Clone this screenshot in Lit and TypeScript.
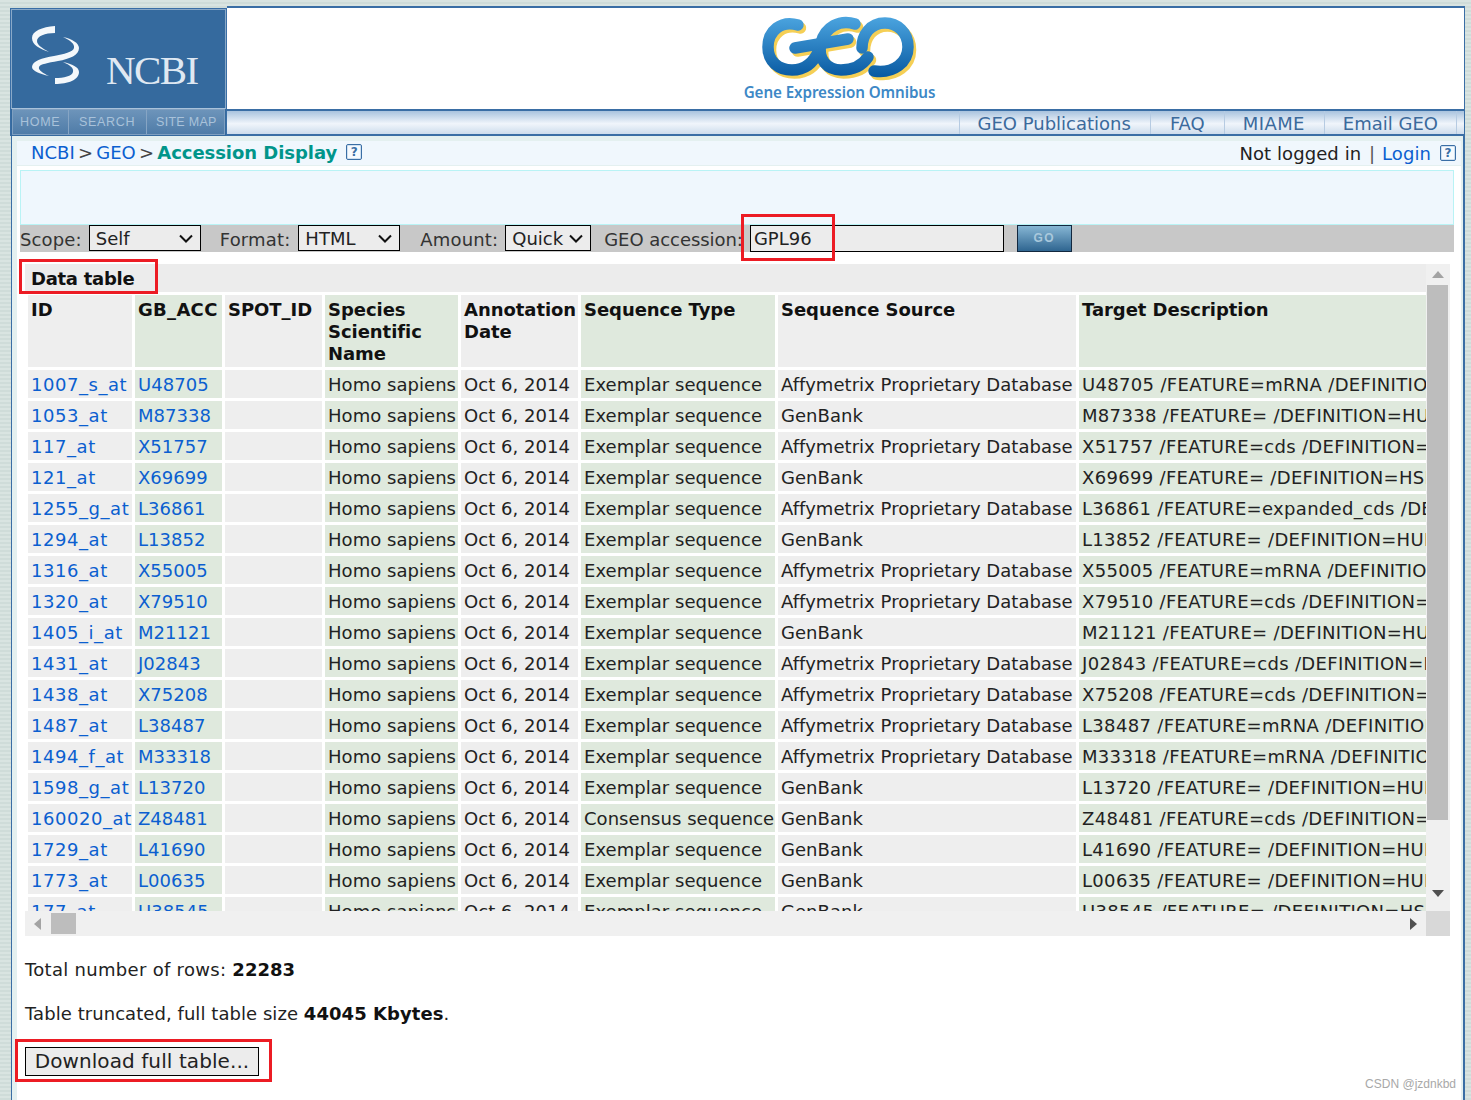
import { LitElement, html, svg, css } from "lit";
import { customElement } from "lit/decorators.js";

const AFFY = "Affymetrix Proprietary Database";
const EX = "Exemplar sequence";

// id, accession, sequence type, source, rest of the target description
const ROWS: [string, string, string, string, string][] = [
  ["1007_s_at", "U48705", EX, AFFY, "/FEATURE=mRNA /DEFINITION=HUMDDR"],
  ["1053_at", "M87338", EX, "GenBank", "/FEATURE= /DEFINITION=HUMA1SBU"],
  ["117_at", "X51757", EX, AFFY, "/FEATURE=cds /DEFINITION=HSP70B"],
  ["121_at", "X69699", EX, "GenBank", "/FEATURE= /DEFINITION=HSPAX8A"],
  ["1255_g_at", "L36861", EX, AFFY, "/FEATURE=expanded_cds /DEFINITION=HUMGCAPB"],
  ["1294_at", "L13852", EX, "GenBank", "/FEATURE= /DEFINITION=HUME1URP"],
  ["1316_at", "X55005", EX, AFFY, "/FEATURE=mRNA /DEFINITION=HSCERBA"],
  ["1320_at", "X79510", EX, AFFY, "/FEATURE=cds /DEFINITION=HSPTPD1"],
  ["1405_i_at", "M21121", EX, "GenBank", "/FEATURE= /DEFINITION=HUMTCSM"],
  ["1431_at", "J02843", EX, AFFY, "/FEATURE=cds /DEFINITION=HUMCYPIIE"],
  ["1438_at", "X75208", EX, AFFY, "/FEATURE=cds /DEFINITION=HSPTKR"],
  ["1487_at", "L38487", EX, AFFY, "/FEATURE=mRNA /DEFINITION=HUMERRA"],
  ["1494_f_at", "M33318", EX, AFFY, "/FEATURE=mRNA /DEFINITION=HUMCYPIIA"],
  ["1598_g_at", "L13720", EX, "GenBank", "/FEATURE= /DEFINITION=HUMGAS6"],
  ["160020_at", "Z48481", "Consensus sequence", "GenBank", "/FEATURE=cds /DEFINITION=HSMMP14"],
  ["1729_at", "L41690", EX, "GenBank", "/FEATURE= /DEFINITION=HUMTRADD"],
  ["1773_at", "L00635", EX, "GenBank", "/FEATURE= /DEFINITION=HUMFPTB"],
  ["177_at", "U38545", EX, "GenBank", "/FEATURE= /DEFINITION=HSU38545"],
];

const HEADERS = [
  "ID",
  "GB_ACC",
  "SPOT_ID",
  "Species Scientific Name",
  "Annotation Date",
  "Sequence Type",
  "Sequence Source",
  "Target Description",
];

const COLS = [104, 87, 97, 133, 117, 194, 298, 420];

const CHEVRON =
  "url(\"data:image/svg+xml,%3Csvg xmlns='http://www.w3.org/2000/svg' width='14' height='9'%3E%3Cpath d='M1 1.5l6 6 6-6' fill='none' stroke='%23111' stroke-width='2'/%3E%3C/svg%3E\")";

@customElement("app-root")
export class AppRoot extends LitElement {
  static override styles = css`
    :host {
      display: block;
      position: relative;
      height: 1100px;
      overflow: hidden;
      background: repeating-linear-gradient(0deg, #cfdcd9 0 2px, #d9e4e1 2px 4px);
      font-family: "DejaVu Sans", Verdana, sans-serif;
      font-size: 18px;
      color: #222;
    }
    a {
      color: #0b5fd0;
      text-decoration: none;
    }
    .frame {
      margin-left: 10px;
      width: 1455px;
      padding-top: 6px;
    }
    .top {
      display: flex;
      height: 130px;
    }
    .brand {
      width: 217px;
      box-sizing: border-box;
      margin-top: 2px;
      border: 1px solid #3a6ea5;
      border-bottom: none;
      background: #356a9e;
      flex: none;
    }
    .ncbi {
      display: flex;
      height: 100px;
      box-sizing: border-box;
      border: 1px solid #8aa9c8;
      border-bottom: 1px solid #a9c2da;
      align-items: flex-start;
    }
    .ncbi svg {
      display: block;
      margin: 10px 0 0 8px;
      flex: none;
    }
    .ncbi span {
      margin: 36px 0 0 23px;
      font: 41px "Liberation Serif", serif;
      letter-spacing: -1.6px;
      color: #dfe8f2;
    }
    .ncbi-nav {
      display: flex;
      height: 26px;
      margin: 0 1px;
      background: linear-gradient(#6d94ba, #4f7ca8);
      border: 1px solid #7f9fc0;
      box-sizing: border-box;
      font: 12.5px "Liberation Sans", sans-serif;
      letter-spacing: 0.7px;
      color: #a9c2da;
      line-height: 24px;
      white-space: nowrap;
    }
    .ncbi-nav div {
      padding-left: 10px;
      border-right: 1px solid #86a5c4;
      box-sizing: border-box;
    }
    .ncbi-nav .home {
      width: 56px;
      padding-left: 7px;
    }
    .ncbi-nav .search {
      width: 78px;
    }
    .ncbi-nav .map {
      border-right: none;
      padding-left: 9px;
      letter-spacing: 0.3px;
    }
    .banner {
      flex: 1;
      display: flex;
      flex-direction: column;
    }
    .geo {
      height: 103px;
      background: #fff;
      border-top: 2px solid #3a6ea5;
      border-right: 1px solid #3a6ea5;
      display: flex;
      flex-direction: column;
      align-items: center;
      box-sizing: border-box;
      padding-right: 12px;
    }
    .geo svg {
      display: block;
      margin-top: 2px;
      flex: none;
    }
    .geo span {
      font: 600 15.2px "Noto Sans", sans-serif;
      letter-spacing: -0.08px;
      line-height: 18px;
      color: #3d88c6;
      margin-top: 1px;
    }
    .links {
      height: 27px;
      border-top: 2px solid #3a6ea5;
      border-bottom: 2px solid #3a6ea5;
      border-right: 1px solid #3a6ea5;
      box-sizing: border-box;
      background: linear-gradient(#a9c3de, #f0f5fb 55%, #cddcec);
      display: flex;
      justify-content: flex-end;
      padding-right: 7px;
      color: #3b6a9c;
      line-height: 26px;
    }
    .links div {
      padding: 0 19px 0 18px;
      border-left: 1px solid #b6cbe2;
    }
    .links .faq {
      padding-left: 19px;
    }
    .links .miame {
      letter-spacing: 0.4px;
    }
    .links .email {
      padding-right: 18px;
      border-right: 1px solid #b6cbe2;
    }
    .body {
      border-left: 1px solid #3a6ea5;
      border-right: 2px solid #3a6ea5;
      margin-left: 1px;
      padding: 5px 2px 0 5px;
      background: #e4f0f0;
      height: 970px;
      box-sizing: border-box;
    }
    .crumb {
      height: 24px;
      display: flex;
      align-items: center;
      justify-content: space-between;
      background: #f0f7fd;
      padding: 0 5px 0 14px;
      color: #444;
      white-space: nowrap;
    }
    .crumb-left {
      word-spacing: -2.5px;
      margin-top: -1px;
    }
    .crumb .here {
      color: #00958a;
      font-weight: 700;
      word-spacing: 0;
      letter-spacing: -0.05px;
    }
    .crumb-right {
      color: #222;
      margin-top: 1px;
      letter-spacing: 0.08px;
    }
    .sep {
      margin: 0 1px 0 2px;
      color: #555;
    }
    .help {
      display: inline-block;
      width: 14px;
      height: 14px;
      border: 1px solid #3a6ea5;
      border-radius: 2px;
      font: 700 12px/14px "DejaVu Sans", sans-serif;
      color: #3a6ea5;
      text-align: center;
      letter-spacing: 0;
      background: #f6fafe;
      box-shadow: inset 0 0 0 1px #cfe0f0;
      vertical-align: 3px;
      margin-left: 9px;
    }
    .panel {
      background: #fff;
      margin-top: 1px;
      height: 940px;
      padding: 4px 7px 0 3px;
      box-sizing: border-box;
    }
    .notice {
      height: 55px;
      box-sizing: border-box;
      background: #eff7fd;
      border: 1px solid #b9f3f5;
    }
    .form {
      height: 27px;
      background: #c8c8c8;
      display: flex;
      align-items: flex-start;
      line-height: 30px;
      letter-spacing: 0.15px;
      color: #333;
    }
    .form span {
      flex: none;
    }
    .form .acc-label {
      letter-spacing: -0.05px;
    }
    select,
    input {
      box-sizing: border-box;
      flex: none;
      border: 1px solid #000;
      border-radius: 0;
      background-color: #ececec;
      font: 18px "DejaVu Sans", sans-serif;
      color: #222;
    }
    select {
      height: 26px;
      appearance: none;
      padding: 0 0 0 6px;
      background-image: ${css([CHEVRON] as unknown as TemplateStringsArray)};
      background-repeat: no-repeat;
      background-position: right 7px center;
    }
    input {
      height: 27px;
      width: 254px;
      margin-left: 7px;
      padding: 0 0 0 3px;
    }
    .scope {
      width: 112px;
      margin: 0 19px 0 7px;
    }
    .format {
      width: 102px;
      margin: 0 20px 0 8px;
    }
    .amount {
      width: 86px;
      margin: 0 13px 0 7px;
    }
    .go {
      box-sizing: border-box;
      width: 55px;
      height: 27px;
      margin-left: 13px;
      border: 1px solid #12283f;
      background: linear-gradient(#86b6d4, #2f6590);
      color: #a9c8dc;
      font: 700 12px/25px "Liberation Sans", sans-serif;
      letter-spacing: 1.5px;
      text-align: center;
    }
    .scroller {
      margin: 12px 0 0 5px;
      display: grid;
      grid-template-columns: 1401px 24px;
      grid-template-rows: 647px 25px;
    }
    .view {
      overflow: hidden;
    }
    .caption {
      height: 28px;
      background: #ececec;
      font-weight: 700;
      padding-left: 6px;
      line-height: 29px;
      letter-spacing: -0.28px;
      color: #111;
    }
    table {
      table-layout: fixed;
      border-collapse: separate;
      border-spacing: 3px;
      width: 1477px;
    }
    th,
    td {
      padding: 0 0 0 3px;
      background: #eeeeee;
      overflow: hidden;
      white-space: nowrap;
      text-align: left;
    }
    th {
      height: 72px;
      vertical-align: top;
      white-space: normal;
      font-weight: 700;
      line-height: 22px;
      padding-top: 4px;
      box-sizing: border-box;
      color: #111;
      letter-spacing: -0.05px;
    }
    th.acc {
      letter-spacing: 0.3px;
    }
    td {
      box-sizing: border-box;
      height: 28px;
      padding-top: 2px;
      line-height: 26px;
      color: #222;
      letter-spacing: 0.04px;
    }
    td.id {
      letter-spacing: 0.55px;
    }
    td.target {
      letter-spacing: 0.32px;
    }
    .alt {
      background: #dfe9dd;
    }
    .vbar {
      background: #f0f0f0;
      display: flex;
      flex-direction: column;
      align-items: center;
      padding-top: 7px;
      box-sizing: border-box;
    }
    .vthumb {
      width: 21px;
      height: 535px;
      margin-top: 7px;
      margin-left: -1px;
      background: #bdbdbd;
    }
    .hbar {
      background: #f0f0f0;
      display: flex;
      align-items: center;
      padding-left: 9px;
    }
    .hthumb {
      width: 25px;
      height: 21px;
      margin-left: 10px;
      background: #bdbdbd;
    }
    .corner {
      background: #d8d8d8;
    }
    .up,
    .down,
    .left,
    .right {
      width: 0;
      height: 0;
      border-style: solid;
      border-color: transparent;
    }
    .up {
      border-width: 0 6px 7px;
      border-bottom-color: #a3a3a3;
    }
    .down {
      border-width: 7px 6px 0;
      border-top-color: #505050;
      margin-top: 70px;
    }
    .left {
      border-width: 6px 7px 6px 0;
      border-right-color: #a3a3a3;
    }
    .right {
      border-width: 6px 0 6px 7px;
      border-left-color: #505050;
      margin-left: auto;
      margin-right: 9px;
    }
    .foot {
      margin-left: 5px;
      letter-spacing: 0.06px;
      color: #222;
    }
    .foot p {
      margin: 0;
      height: 44px;
      line-height: 22px;
    }
    .foot p:first-child {
      margin-top: 23px;
      letter-spacing: 0.3px;
    }
    .foot b {
      color: #111;
      letter-spacing: 0.05px;
    }
    .download {
      display: block;
      width: 234px;
      height: 29px;
      box-sizing: border-box;
      border: 1px solid #000;
      background: #ececec;
      font: 20px/27px "DejaVu Sans", sans-serif;
      color: #222;
      letter-spacing: 0.09px;
      padding: 0;
      text-align: center;
    }
    /* red annotation boxes drawn over the screenshot */
    .mark {
      position: absolute;
      box-sizing: border-box;
      border: 3px solid #ec1c24;
    }
    .mark-input {
      left: 741px;
      top: 214px;
      width: 94px;
      height: 47px;
    }
    .mark-caption {
      left: 19px;
      top: 259px;
      width: 139px;
      height: 35px;
    }
    .mark-download {
      left: 15px;
      top: 1039px;
      width: 257px;
      height: 43px;
    }
    .watermark {
      position: absolute;
      right: 15px;
      bottom: 9px;
      font: 12px "Liberation Sans", sans-serif;
      color: #a8a8a8;
    }
  `;

  private renderGeoMark() {
    const strokes = svg`
      <path d="M58 15 C41 10 28 21 28 37 C28 52 39 60 52 60 C66 60 74 52 79 40" />
      <path d="M55 38 L108 29" />
      <path d="M115 14 C100 9 85 17 81 33 C77 50 88 60 101 60 C113 60 122 56 128 47" />
      <path d="M134 61 C154 64 168 52 168 37 C168 22 157 13 145 13 C130 13 122 25 122 38" />
    `;
    return html`
      <svg width="200" height="72" viewBox="0 0 200 72" fill="none" stroke-width="11.5" stroke-linecap="round">
        <defs>
          <linearGradient id="geoBlue" gradientUnits="userSpaceOnUse" x1="0" y1="8" x2="0" y2="66">
            <stop offset="0" stop-color="#4aa3de" />
            <stop offset="1" stop-color="#0a5ba3" />
          </linearGradient>
        </defs>
        <g stroke="#f5cf55" transform="translate(2.5 3)">${strokes}</g>
        <g stroke="url(#geoBlue)">${strokes}</g>
      </svg>
    `;
  }

  private renderHelix() {
    return html`
      <svg width="63" height="70" viewBox="0 0 63 70" fill="#f4f8fb">
        <path d="M35 6 C22 7 12 11 12 18 C12 25 20 29 29 32 C22 28 17 25 17 21 C17 16 25 13 35 13 Z" />
        <path d="M43 17 C50 20 55 24 54 28 C53 32 44 34 34 36 C22 38 12 41 12 47 C12 51 20 54 29 56 C23 53 18 50 19 47 C20 44 28 43 38 41 C50 39 59 35 59 28 C59 23 52 19 43 17 Z" />
        <path d="M43 42 C50 45 54 48 53 52 C52 56 44 58 35 58 L35 64 C48 64 59 60 59 52 C59 47 52 44 43 42 Z" />
      </svg>
    `;
  }

  override render() {
    return html`
      <div class="frame">
        <div class="top">
          <div class="brand">
            <div class="ncbi">${this.renderHelix()}<span>NCBI</span></div>
            <div class="ncbi-nav">
              <div class="home">HOME</div>
              <div class="search">SEARCH</div>
              <div class="map">SITE MAP</div>
            </div>
          </div>
          <div class="banner">
            <div class="geo">${this.renderGeoMark()}<span>Gene Expression Omnibus</span></div>
            <div class="links">
              <div>GEO Publications</div>
              <div class="faq">FAQ</div>
              <div class="miame">MIAME</div>
              <div class="email">Email GEO</div>
            </div>
          </div>
        </div>
        <div class="body">
          <div class="crumb">
            <div class="crumb-left">
              <a href="#">NCBI</a> &gt; <a href="#">GEO</a> &gt; <span class="here">Accession Display</span><span class="help">?</span>
            </div>
            <div class="crumb-right">
              Not logged in <span class="sep">|</span> <a href="#">Login</a><span class="help">?</span>
            </div>
          </div>
          <div class="panel">
            <div class="notice"></div>
            <div class="form">
              <span>Scope:</span>
              <select class="scope"><option>Self</option></select>
              <span>Format:</span>
              <select class="format"><option>HTML</option></select>
              <span>Amount:</span>
              <select class="amount"><option>Quick</option></select>
              <span class="acc-label">GEO accession:</span>
              <input value="GPL96" />
              <div class="go">GO</div>
            </div>
            <div class="scroller">
              <div class="view">
                <div class="caption">Data table</div>
                <table>
                  <colgroup>
                    ${COLS.map((w) => html`<col style="width:${w}px" />`)}
                  </colgroup>
                  <tr>
                    ${HEADERS.map(
                      (h, i) => html`<th class="${i % 2 ? "alt" : ""} ${i === 1 ? "acc" : ""}">${h}</th>`,
                    )}
                  </tr>
                  ${ROWS.map(
                    ([id, acc, type, source, rest]) => html`
                      <tr>
                        <td class="id"><a href="#">${id}</a></td>
                        <td class="alt"><a href="#">${acc}</a></td>
                        <td></td>
                        <td class="alt">Homo sapiens</td>
                        <td>Oct 6, 2014</td>
                        <td class="alt">${type}</td>
                        <td>${source}</td>
                        <td class="alt target">${acc} ${rest}</td>
                      </tr>
                    `,
                  )}
                </table>
              </div>
              <div class="vbar">
                <div class="up"></div>
                <div class="vthumb"></div>
                <div class="down"></div>
              </div>
              <div class="hbar">
                <div class="left"></div>
                <div class="hthumb"></div>
                <div class="right"></div>
              </div>
              <div class="corner"></div>
            </div>
            <div class="foot">
              <p>Total number of rows: <b>22283</b></p>
              <p>Table truncated, full table size <b>44045 Kbytes</b>.</p>
              <button class="download">Download full table...</button>
            </div>
          </div>
        </div>
      </div>
      <div class="mark mark-input"></div>
      <div class="mark mark-caption"></div>
      <div class="mark mark-download"></div>
      <div class="watermark">CSDN @jzdnkbd</div>
    `;
  }
}
